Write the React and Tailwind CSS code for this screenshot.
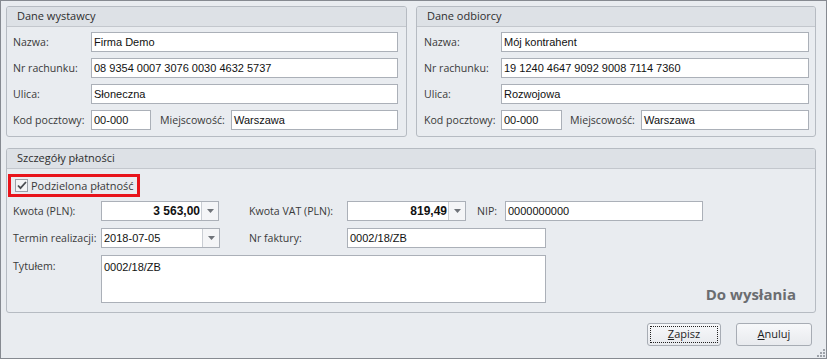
import React from 'react';

const LABEL = "font-['Open_Sans',sans-serif] text-[10.6px] text-[#3a3a3a] leading-none";
const VALUE = "font-['Liberation_Sans',Arial,sans-serif] text-[11px] text-[#111]";

const Field = ({ w, value, bold, right }) => (
  <div
    className={`h-[20px] ${w} shrink-0 bg-white border border-[#abb0b8] flex items-center px-[2px] ${VALUE} ${
      bold ? 'font-bold text-[12px]' : ''
    } ${right ? 'justify-end' : ''}`}
  >
    {value}
  </div>
);

const Arrow = () => (
  <svg width="7" height="4" viewBox="0 0 7 4">
    <path d="M0 0h7L3.5 4z" fill="#6f7379" />
  </svg>
);

const Combo = ({ w, value, bold }) => (
  <div className={`h-[20px] ${w} shrink-0 bg-white border border-[#abb0b8] flex`}>
    <div
      className={`flex-1 flex items-center px-[2px] ${VALUE} ${
        bold ? 'font-bold text-[12px] justify-end pr-[1px]' : ''
      }`}
    >
      {value}
    </div>
    <div className="w-[17px] border-l border-[#c9cdd3] bg-[#f4f5f7] flex items-center justify-center">
      <Arrow />
    </div>
  </div>
);

const Row = ({ label, lw, children }) => (
  <div className="flex items-center h-[20px]">
    <div className={`${lw} shrink-0 ${LABEL}`}>{label}</div>
    {children}
  </div>
);

const Group = ({ title, className, bodyClass, children }) => (
  <div className={`border border-[#b6bbc2] rounded-[3px] flex flex-col ${className}`}>
    <div className="h-[20px] shrink-0 bg-[#dde1e6] border-b border-[#c3c7cd] rounded-t-[2px] flex items-center pl-[10px] font-['Open_Sans',sans-serif] text-[11px] text-[#2e2e2e]">
      {title}
    </div>
    <div className={bodyClass}>{children}</div>
  </div>
);

const Address = ({ pl, lw, iw, kw, mw, mlw, name, account, street }) => (
  <div className={`flex flex-col gap-[6px] pt-[5px] ${pl}`}>
    <Row label="Nazwa:" lw={lw}>
      <Field w={iw} value={name} />
    </Row>
    <Row label="Nr rachunku:" lw={lw}>
      <Field w={iw} value={account} />
    </Row>
    <Row label="Ulica:" lw={lw}>
      <Field w={iw} value={street} />
    </Row>
    <Row label="Kod pocztowy:" lw={lw}>
      <Field w={kw} value="00-000" />
      <div className={`${mlw} shrink-0 ${LABEL}`}>Miejscowość:</div>
      <Field w={mw} value="Warszawa" />
    </Row>
  </div>
);

const Button = ({ children, focused, w }) => (
  <div
    className={`${w} h-[23px] rounded-[3px] border border-[#a7acb4] bg-gradient-to-b from-[#f7f8fa] to-[#e8eaee] p-[2px] flex`}
  >
    <div
      className={`flex-1 flex items-center justify-center font-['Open_Sans',sans-serif] text-[11px] text-[#1e1e1e] ${
        focused ? 'border border-dotted border-[#222]' : ''
      }`}
    >
      {children}
    </div>
  </div>
);

export default function App() {
  return (
    <div className="relative w-[827px] h-[359px] border border-[#868a91] bg-[#e9ecf0] pt-[5px] pl-[5px] flex flex-col">
      <div className="flex gap-[9px]">
        <Group title="Dane wystawcy" className="w-[401px] h-[131px]">
          <Address
            pl="pl-[6px]"
            lw="w-[78px]"
            iw="w-[307px]"
            kw="w-[60px]"
            mlw="w-[71px] ml-[9px]"
            mw="w-[167px]"
            name="Firma Demo"
            account="08 9354 0007 3076 0030 4632 5737"
            street="Słoneczna"
          />
        </Group>
        <Group title="Dane odbiorcy" className="w-[400px] h-[131px]">
          <Address
            pl="pl-[7px]"
            lw="w-[77px]"
            iw="w-[308px]"
            kw="w-[61px]"
            mlw="w-[71px] ml-[8px]"
            mw="w-[168px]"
            name="Mój kontrahent"
            account="19 1240 4647 9092 9008 7114 7360"
            street="Rozwojowa"
          />
        </Group>
      </div>

      <Group title="Szczegóły płatności" className="mt-[11px] w-[810px] h-[165px]" bodyClass="flex flex-col">
        <div className="mt-[5px] ml-[1px] w-[132px] h-[23px] border-[3px] border-[#e8141b] flex items-center pl-[4px] gap-[3px]">
          <div className="w-[13px] h-[13px] border border-[#9ba0a8] bg-[#f3f4f6] flex items-center justify-center">
            <svg width="10" height="9" viewBox="0 0 10 9">
              <path d="M1 4.5l2.5 2.7L9 1" fill="none" stroke="#4a4d52" strokeWidth="1.8" />
            </svg>
          </div>
          <span className={LABEL + ' text-[#2a2a2a] text-[11px]'}>Podzielona płatność</span>
        </div>

        <div className="flex flex-col pl-[6px] mt-[4px]">
          <Row label="Kwota (PLN):" lw="w-[88px]">
            <Combo w="w-[118px]" value="3 563,00" bold />
            <div className={`ml-[30px] w-[98px] shrink-0 ${LABEL}`}>Kwota VAT (PLN):</div>
            <Combo w="w-[119px]" value="819,49" bold />
            <div className={`ml-[11px] w-[28px] shrink-0 ${LABEL}`}>NIP:</div>
            <Field w="w-[198px]" value="0000000000" />
          </Row>
          <div className="mt-[7px]">
            <Row label="Termin realizacji:" lw="w-[88px]">
              <Combo w="w-[119px]" value="2018-07-05" />
              <div className={`ml-[29px] w-[98px] shrink-0 ${LABEL}`}>Nr faktury:</div>
              <Field w="w-[199px]" value="0002/18/ZB" />
            </Row>
          </div>
          <div className="mt-[7px] flex h-[48px]">
            <div className={`w-[88px] shrink-0 pt-[6px] ${LABEL}`}>Tytułem:</div>
            <div className={`w-[445px] h-[48px] bg-white border border-[#abb0b8] px-[2px] pt-[3px] ${VALUE}`}>
              0002/18/ZB
            </div>
            <div className="flex-1 flex items-end justify-end pr-[19px] pb-[1px]">
              <span className="font-['Open_Sans',sans-serif] font-bold text-[15px] leading-none text-[#6b6d70]">
                Do wysłania
              </span>
            </div>
          </div>
        </div>
      </Group>

      <div className="flex justify-end gap-[15px] mt-[10px] pr-[14px]">
        <Button w="w-[74px]" focused>
          <span>
            <span className="underline">Z</span>apisz
          </span>
        </Button>
        <Button w="w-[76px]">
          <span>
            <span className="underline">A</span>nuluj
          </span>
        </Button>
      </div>

      <svg className="absolute right-[1px] bottom-[1px]" width="9" height="9" viewBox="0 0 9 9">
        <rect x="7" y="1" width="2" height="2" fill="#9ea3aa" />
        <rect x="4" y="4" width="2" height="2" fill="#9ea3aa" />
        <rect x="7" y="4" width="2" height="2" fill="#9ea3aa" />
        <rect x="1" y="7" width="2" height="2" fill="#9ea3aa" />
        <rect x="4" y="7" width="2" height="2" fill="#9ea3aa" />
        <rect x="7" y="7" width="2" height="2" fill="#9ea3aa" />
      </svg>
    </div>
  );
}
